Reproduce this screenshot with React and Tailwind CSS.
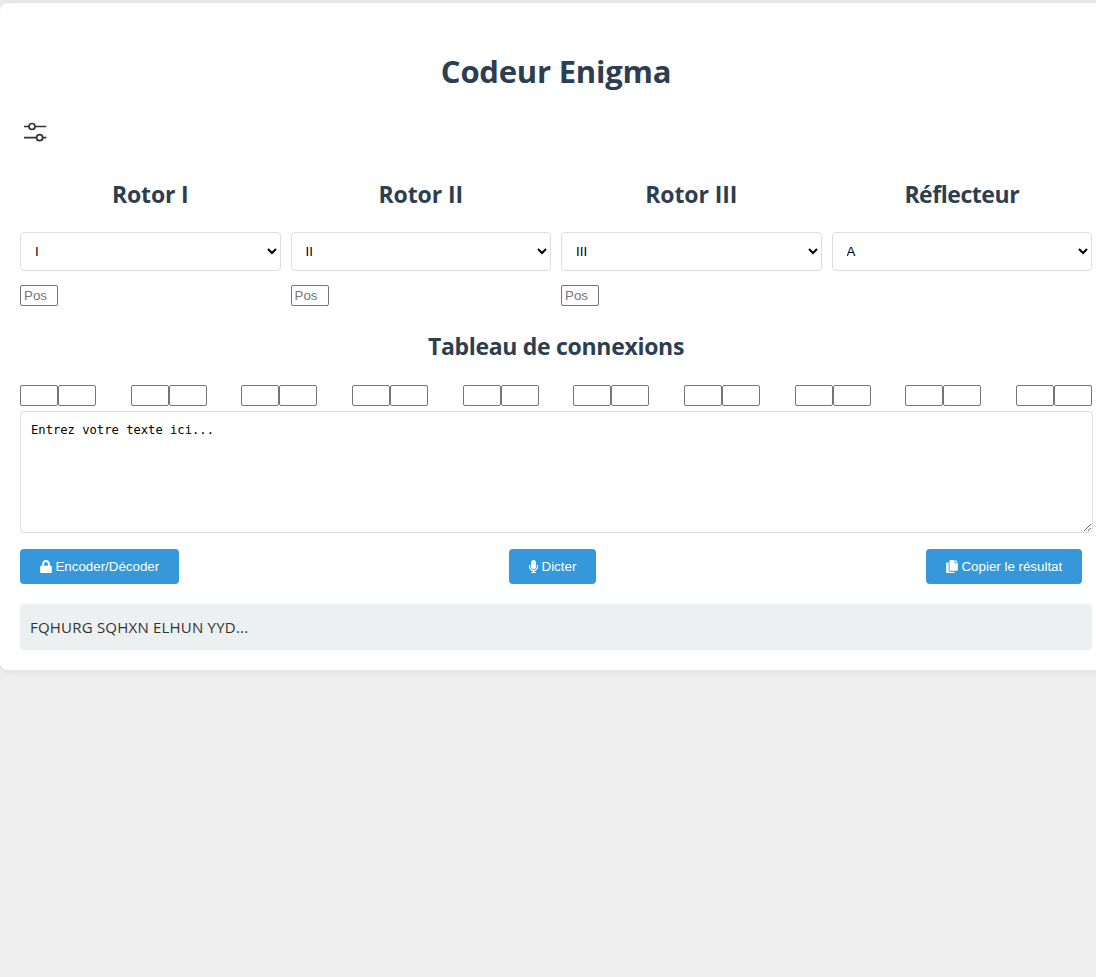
import React from "react";

const ROTORS = [
  { title: "Rotor I", value: "I", position: true, tracking: "tracking-[-0.15px]" },
  { title: "Rotor II", value: "II", position: true, tracking: "tracking-[-0.1px]" },
  { title: "Rotor III", value: "III", position: true, tracking: "tracking-[-0.1px]" },
  { title: "Réflecteur", value: "A", position: false, tracking: "tracking-[-0.45px]" },
];

const field =
  "block h-[21px] w-[38px] rounded-[2px] border border-[#767676] bg-white px-[3px] font-['Liberation_Sans',sans-serif] text-[13.333px] leading-[15px] placeholder:text-[#757575]";
const heading =
  "font-['Open_Sans',sans-serif] font-bold text-center text-[#2c3e50]";

function SlidersIcon() {
  return (
    <svg className="block" width="30" height="30" viewBox="0 0 30 30" fill="none" stroke="#333" strokeWidth="1.7">
      <path d="M4 9.5h5M15 9.5h11.3M4 20.7h12.5M22.5 20.7h3.8" />
      <circle cx="12" cy="9.5" r="3" />
      <circle cx="19.6" cy="20.7" r="3" />
    </svg>
  );
}

function LockIcon() {
  return (
    <svg className="shrink-0" width="12" height="13.333" viewBox="0 0 448 512" fill="currentColor">
      <path d="M400 224h-24v-72C376 68.200 307.800 0 224 0S72 68.200 72 152v72H48c-26.500 0-48 21.500-48 48v192c0 26.500 21.500 48 48 48h352c26.500 0 48-21.500 48-48V272c0-26.500-21.500-48-48-48zm-104 0H152v-72c0-39.700 32.300-72 72-72s72 32.300 72 72v72z" />
    </svg>
  );
}

function MicIcon() {
  return (
    <svg className="shrink-0" width="9.17" height="13.333" viewBox="0 0 352 512" fill="currentColor">
      <path d="M176 352c53.020 0 96-42.980 96-96V96c0-53.020-42.980-96-96-96S80 42.980 80 96v160c0 53.020 42.980 96 96 96zm160-160h-16c-8.840 0-16 7.160-16 16v48c0 74.800-64.490 134.820-140.790 127.380C96.710 376.890 48 317.110 48 250.300V208c0-8.840-7.160-16-16-16H16c-8.840 0-16 7.160-16 16v40.160c0 89.640 63.970 169.550 152 181.690V464H96c-8.840 0-16 7.160-16 16v16c0 8.840 7.160 16 16 16h160c8.840 0 16-7.160 16-16v-16c0-8.840-7.160-16-16-16h-56v-33.770C285.710 418.470 352 344.900 352 256v-48c0-8.840-7.160-16-16-16z" />
    </svg>
  );
}

function CopyIcon() {
  return (
    <svg className="shrink-0" width="12" height="13.333" viewBox="0 0 448 512" fill="currentColor">
      <path d="M320 448v40c0 13.255-10.745 24-24 24H24c-13.255 0-24-10.745-24-24V120c0-13.255 10.745-24 24-24h72v296c0 30.879 25.121 56 56 56h168zm0-344V0H152c-13.255 0-24 10.745-24 24v368c0 13.255 10.745 24 24 24h272c13.255 0 24-10.745 24-24V128H344c-13.200 0-24-10.800-24-24zm120.971-31.029L375.029 7.029A24 24 0 0 0 358.059 0H352v96h96v-6.059a24 24 0 0 0-7.029-16.970z" />
    </svg>
  );
}

function Button({ icon, label, width }) {
  return (
    <button
      className={`flex h-[35px] items-center justify-center gap-[3.700px] whitespace-nowrap rounded-[4px] bg-[#3498db] font-['Liberation_Sans',sans-serif] text-[13.333px] leading-[15px] text-white ${width}`}
    >
      {icon}
      <span>{label}</span>
    </button>
  );
}

export default function App() {
  return (
    <div className="h-[977px] w-full overflow-hidden bg-[#efefef] pt-[3px]">
      <main className="h-[667px] w-[1112px] rounded-[8px] bg-white px-5 pt-[47px] shadow-[0_0_10px_rgba(0,0,0,0.1)]">
        <h1 className={`${heading} h-[43px] text-[31px] leading-[43px] tracking-[-0.23px]`}>Codeur Enigma</h1>
        <div className="mt-6 h-[30px]">
          <SlidersIcon />
        </div>
        <section className="mt-[32px] grid grid-cols-4 gap-x-[10px]">
          {ROTORS.map((rotor) => (
            <div key={rotor.title}>
              <h2 className={`${heading} h-[32px] text-[23px] leading-[30px] ${rotor.tracking}`}>{rotor.title}</h2>
              <select
                className="mt-[21px] block h-[39px] w-full rounded-[4px] border border-[#ddd] bg-white p-[10px] font-['Liberation_Sans',sans-serif] text-[13.333px] text-black"
                defaultValue={rotor.value}
              >
                <option>{rotor.value}</option>
              </select>
              {rotor.position && <input className={`${field} mt-[14px]`} placeholder="Pos" />}
            </div>
          ))}
        </section>
        <h2 className={`${heading} mt-[25px] h-[32px] text-[23px] leading-[30px] tracking-[-0.3px]`}>Tableau de connexions</h2>
        <div className="mt-[22px] flex justify-between">
          {Array.from({ length: 10 }, (_, i) => (
            <div key={i} className="flex">
              <input className={field} />
              <input className={field} />
            </div>
          ))}
        </div>
        <textarea
          className="mt-[5px] block h-[122px] w-[1073px] rounded-[4px] border border-[#ddd] bg-white p-[10px] font-['DejaVu_Sans_Mono',monospace] text-[12.17px] leading-[16px] text-black"
          defaultValue="Entrez votre texte ici..."
        />
        <div className="mr-[10px] mt-4 flex justify-between">
          <Button icon={<LockIcon />} label="Encoder/Décoder" width="w-[159px]" />
          <Button icon={<MicIcon />} label="Dicter" width="w-[87px]" />
          <Button icon={<CopyIcon />} label="Copier le résultat" width="w-[156px]" />
        </div>
        <div className="mt-5 h-[46px] rounded-[4px] bg-[#ecf0f1] px-[10px] font-['Open_Sans',sans-serif] text-[15px] leading-[46px] tracking-[0.21px] text-[#333]">
          FQHURG SQHXN ELHUN YYD...
        </div>
      </main>
    </div>
  );
}
